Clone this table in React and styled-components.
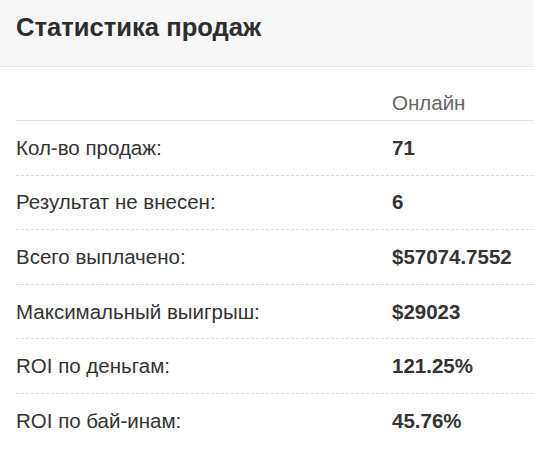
import React from 'react'
import styled, { createGlobalStyle } from 'styled-components'

const rows = [
  { label: 'Кол-во продаж:', value: '71' },
  { label: 'Результат не внесен:', value: '6' },
  { label: 'Всего выплачено:', value: '$57074.7552' },
  { label: 'Максимальный выигрыш:', value: '$29023' },
  { label: 'ROI по деньгам:', value: '121.25%' },
  { label: 'ROI по бай-инам:', value: '45.76%' },
]

function App() {
  return (
    <>
      <GlobalStyle />
      <Panel>
        <Header>
          <Title>Статистика продаж</Title>
        </Header>
        <Body>
          <HeadRow>
            <Label />
            <ColumnName>Онлайн</ColumnName>
          </HeadRow>
          {rows.map((r, i) => (
            <Row key={r.label} last={i === rows.length - 1}>
              <Label>{r.label}</Label>
              <Value>{r.value}</Value>
            </Row>
          ))}
        </Body>
      </Panel>
    </>
  )
}

export default App

const GlobalStyle = createGlobalStyle`
  body {
    margin: 0;
    background: #fff;
    font-family: "Liberation Sans", Arial, sans-serif;
  }
`

const Panel = styled.div`
  width: 534px;
  color: #333;
`

const Header = styled.div`
  background: #f7f6f6;
  border-bottom: 1px solid #e3e3e3;
  height: 67px;
  box-sizing: border-box;
  padding: 12px 16px 0;
`

const Title = styled.h2`
  margin: 0;
  font-size: 25.6px;
  font-weight: bold;
  color: #2d2d2d;
  line-height: 30px;
`

const Body = styled.div`
  padding: 0 0 0 16px;
`

const HeadRow = styled.div`
  display: grid;
  grid-template-columns: 376px 1fr;
  height: 54px;
  align-items: end;
  padding-bottom: 5px;
  box-sizing: border-box;
  border-bottom: 1px solid #e0e0e0;
`

const ColumnName = styled.div`
  font-size: 20.5px;
  color: #666;
  line-height: 24px;
`

const Row = styled.div`
  display: grid;
  grid-template-columns: 376px 1fr;
  align-items: center;
  height: 54.6px;
  box-sizing: border-box;
  border-bottom: ${p => (p.last ? 'none' : '1px dashed #dcdcdc')};
`

const Label = styled.div`
  font-size: 20.5px;
  line-height: 24px;
  color: #333;
`

const Value = styled.div`
  font-size: 20.5px;
  line-height: 24px;
  font-weight: bold;
  color: #333;
`
